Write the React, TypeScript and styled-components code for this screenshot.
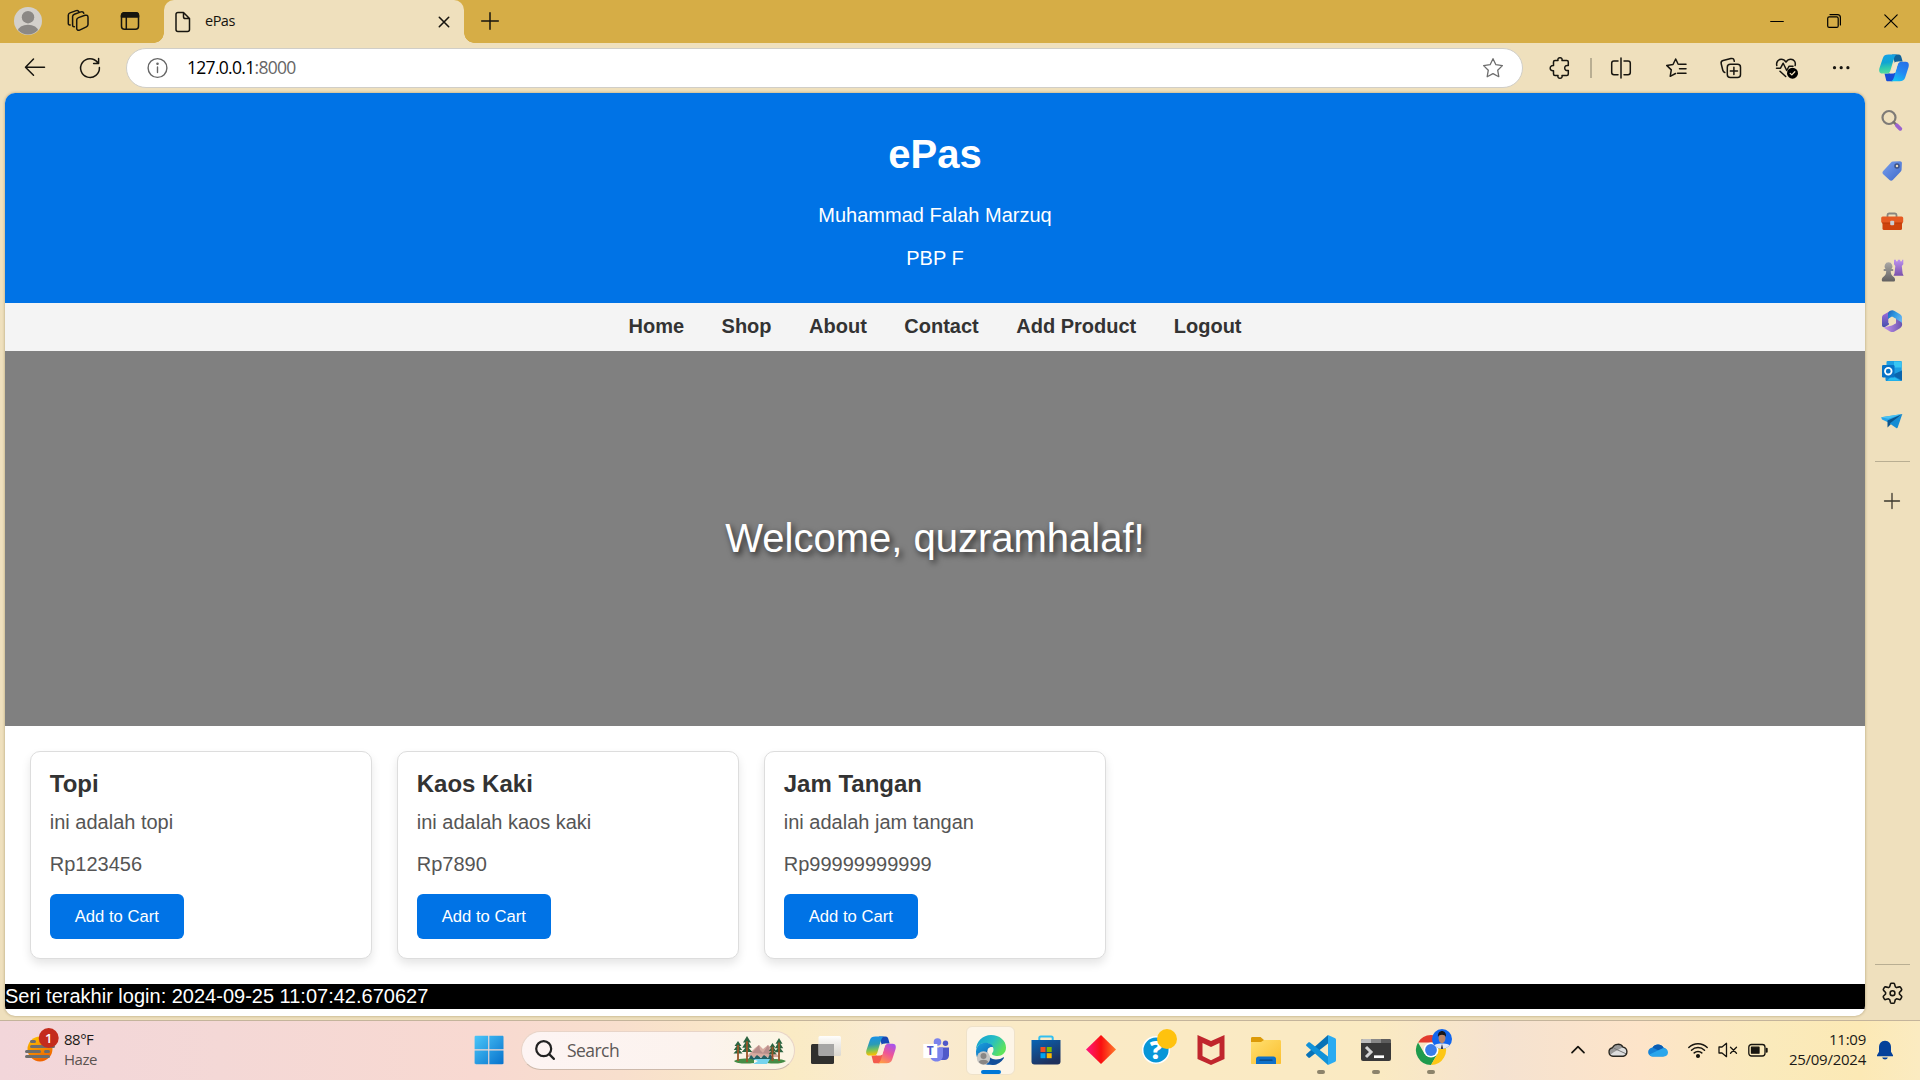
import React from 'react';
import styled, { createGlobalStyle } from 'styled-components';

const UI_FONT = '"Open Sans", "Noto Sans", sans-serif';
const PAGE_FONT = '"Liberation Sans", Arial, sans-serif';

const GlobalStyle = createGlobalStyle`
  * { box-sizing: border-box; }
  body { margin: 0; overflow: hidden; }
`;

const Desktop = styled.div`
  width: 1920px;
  height: 1080px;
  display: flex;
  flex-direction: column;
  background: #efe0bd;
  font-family: ${UI_FONT};
  color: #1b1a17;
`;

const TabStrip = styled.div`
  height: 43px;
  display: flex;
  padding-bottom: 1px;
  background: #d6ad46;
`;

const Spacer = styled.div<{ $w: number }>`
  width: ${(p) => p.$w}px;
  flex: none;
`;

const Cell = styled.div<{ $w: number; $h?: number }>`
  width: ${(p) => p.$w}px;
  height: ${(p) => (p.$h ? `${p.$h}px` : '100%')};
  flex: none;
  display: flex;
  align-items: center;
  justify-content: center;
`;

const Glyph = styled.svg<{ $size?: number }>`
  width: ${(p) => p.$size ?? 24}px;
  height: ${(p) => p.$size ?? 24}px;
  flex: none;
  display: block;
  overflow: visible;
  fill: none;
  stroke-linecap: round;
  stroke-linejoin: round;
`;

const Tab = styled.div`
  position: relative;
  width: 300px;
  height: 43px;
  display: flex;
  align-items: center;
  background: #efe0bd;
  border-radius: 10px 10px 0 0;
  &::before, &::after {
    content: '';
    position: absolute;
    bottom: 0;
    width: 10px;
    height: 10px;
  }
  &::before {
    left: -10px;
    background: radial-gradient(circle at 0 0, transparent 9.5px, #efe0bd 10px);
  }
  &::after {
    right: -10px;
    background: radial-gradient(circle at 100% 0, transparent 9.5px, #efe0bd 10px);
  }
`;

const TabTitle = styled.span`
  flex: 1;
  padding: 0 0 2px 3px;
  font-size: 14.5px;
  letter-spacing: -0.5px;
  line-height: 20px;
  color: #15130e;
`;

const WindowButtons = styled.div`
  margin-left: auto;
  padding-right: 1px;
  display: flex;
`;

const Toolbar = styled.div`
  height: 50px;
  display: flex;
  align-items: center;
`;

const AddressBar = styled.div`
  width: 1397px;
  height: 40px;
  margin: 0 9px 0 0;
  display: flex;
  align-items: center;
  border: 1px solid #d0cec8;
  border-radius: 20px;
  background: #fff;
`;

const Address = styled.span`
  flex: 1;
  padding-bottom: 2px;
  font-size: 17.5px;
  letter-spacing: -0.7px;
  line-height: 24px;
  color: #000;
  span { color: #666; }
`;

const Separator = styled.div`
  width: 2px;
  height: 20px;
  margin: 0 1px 0 2px;
  background: #b9ae92;
`;

const Body = styled.div`
  height: 927px;
  display: flex;
  padding-left: 5px;
`;

const PageFrame = styled.div`
  width: 1860px;
  height: 923px;
  display: flex;
  flex-direction: column;
  overflow: hidden;
  border-radius: 10px;
  background: #fff;
  box-shadow: 0 0 3px rgba(90, 70, 20, 0.45);
  font-family: ${PAGE_FONT};
  font-size: 20px;
  line-height: 23px;
`;

const Header = styled.header`
  height: 210px;
  padding: 11.5px 12.5px;
  background: #0073e6;
  color: #fff;
  text-align: center;
  h1 { margin: 26.5px 0; font-size: 40px; line-height: 46px; }
  p { margin: 0 0 20px; }
`;

const Nav = styled.nav`
  height: 48px;
  padding-bottom: 2px;
  display: flex;
  justify-content: center;
  align-items: center;
  gap: 37.5px;
  background: #f4f4f4;
  color: #333;
  font-weight: bold;
`;

const Hero = styled.section`
  height: 375px;
  padding-bottom: 2px;
  display: flex;
  align-items: center;
  justify-content: center;
  background: #808080;
  color: #fff;
  font-size: 40px;
  line-height: 46px;
  text-shadow: 2.5px 2.5px 6px rgba(0, 0, 0, 0.7);
`;

const Products = styled.section`
  display: grid;
  grid-template-columns: repeat(5, 1fr);
  gap: 25px;
  padding: 25px;
`;

const Card = styled.article`
  height: 208px;
  padding: 18px 18.75px;
  border: 1px solid #ddd;
  border-radius: 10px;
  background: #fff;
  box-shadow: 0 5px 10px rgba(0, 0, 0, 0.1);
  h3 { margin: 0 0 13px; font-size: 24px; line-height: 28px; color: #333; }
  p { margin: 0 0 19px; color: #555; }
  p + p { margin-bottom: 18px; }
`;

const CartButton = styled.button`
  display: block;
  width: 134px;
  height: 45px;
  padding: 0;
  border: 0;
  border-radius: 6px;
  background: #0073e6;
  color: #fff;
  font-family: ${PAGE_FONT};
  font-size: 16.67px;
`;

const LoginBar = styled.footer`
  height: 25px;
  background: #000;
  color: #fff;
  line-height: 24px;
`;

const Sidebar = styled.aside`
  width: 54px;
  height: 927px;
  padding-top: 3px;
  display: flex;
  flex-direction: column;
  align-items: center;
`;

const SideRule = styled.div<{ $top: number }>`
  width: 35px;
  height: 1px;
  flex: none;
  margin-top: ${(p) => p.$top}px;
  background: #b9ae92;
`;

const Taskbar = styled.footer`
  height: 60px;
  display: flex;
  align-items: stretch;
  border-top: 1px solid #c4b49b;
  background: linear-gradient(90deg, #f2d6da 0, #f4d8d6 220px, #f8d9d1 480px, #f8dfcd 620px, #faebc4 790px, #f9ead4 900px, #faeac6 1010px, #faeac2 1380px, #f5e2d0 1500px, #fde4c9 1640px, #faeabc 1760px, #fce9b5 1860px, #fbebc1 1920px);
`;

const Weather = styled.div`
  width: 461px;
  display: flex;
  align-items: center;
  padding: 0 0 2px 24px;
  gap: 7px;
`;

const WeatherText = styled.div`
  padding-bottom: 2px;
  font-size: 15px;
  line-height: 20px;
  letter-spacing: -0.5px;
  span { display: block; color: #5c5450; }
`;

const SearchPill = styled.div`
  width: 274px;
  height: 39px;
  margin: 10px 3px 0 5px;
  display: flex;
  align-items: center;
  border: 1px solid #e8d4c8;
  border-bottom-color: #cdb9ab;
  border-radius: 20px;
  background: linear-gradient(90deg, #fdf4f3, #fcf3ee 65%, #fbf5e2);
  font-size: 17.5px;
  letter-spacing: -0.55px;
  color: #5c5856;
  padding: 0 7px 1px 11px;
  span { flex: 1; padding-left: 10px; }
`;

const AppButton = styled.div<{ $active?: boolean; $running?: boolean }>`
  position: relative;
  width: 49px;
  height: 49px;
  margin: 5px 3px 0;
  padding-bottom: 2px;
  flex: none;
  display: flex;
  align-items: center;
  justify-content: center;
  border: 1px solid ${(p) => (p.$active ? '#efe2c9' : 'transparent')};
  border-radius: 6px;
  background: ${(p) => (p.$active ? '#fdf5e7' : 'transparent')};
  &::after {
    content: '';
    display: ${(p) => (p.$active || p.$running ? 'block' : 'none')};
    position: absolute;
    bottom: 0;
    width: ${(p) => (p.$active ? 20 : 8)}px;
    height: 4px;
    border-radius: 2px;
    background: ${(p) => (p.$active ? '#0078d7' : '#8c836b')};
  }
`;

const Tray = styled.div`
  margin-left: auto;
  padding-bottom: 2px;
  display: flex;
  align-items: center;
`;

const Clock = styled.div`
  width: 93px;
  padding: 0 1px 2px 0;
  font-size: 15px;
  line-height: 20px;
  letter-spacing: -0.25px;
  text-align: right;
`;

const INK = '#17150f';
const K = { stroke: INK, strokeWidth: 1.5 };

const products = [
  { name: 'Topi', about: 'ini adalah topi', price: 'Rp123456' },
  { name: 'Kaos Kaki', about: 'ini adalah kaos kaki', price: 'Rp7890' },
  { name: 'Jam Tangan', about: 'ini adalah jam tangan', price: 'Rp99999999999' },
];

const GEAR =
  'M9.400 5.300 10.300 2.200c.2-.6.500-.9 1.100-.9h2.200c.6 0 .9.300 1.100.9l.9 3.100 1.300.8 3.100-.8c.6-.1 1 0 1.300.5l1.100 1.900c.3.5.2.9-.2 1.400l-2.200 2.300v1.600l2.200 2.300c.4.500.5.9.2 1.400l-1.100 1.900c-.3.500-.7.600-1.300.5l-3.100-.8-1.300.8-.9 3.100c-.2.600-.5.900-1.100.9h-2.200c-.6 0-.9-.3-1.100-.9l-.9-3.100-1.300-.8-3.100.8c-.6.1-1 0-1.300-.5l-1.100-1.900c-.3-.5-.2-.9.2-1.400L5 13V11.400L2.800 9.100c-.4-.5-.5-.9-.2-1.400l1.100-1.900c.3-.5.7-.6 1.300-.5l3.100.8z';

/* The ribbon mark, shared by the toolbar (cool) and the taskbar (warm). */
const Copilot = ({ id, warm }: { id: string; warm?: boolean }) => (
  <Glyph $size={30} viewBox="0 0 30 30">
    <defs>
      <linearGradient id={`${id}a`} x1="0" y1="0" x2="0.1" y2="1">
        <stop offset="0" stopColor={warm ? '#1590ee' : '#14a1ea'} />
        <stop offset="0.45" stopColor={warm ? '#2b9bb5' : '#10a5d3'} />
        <stop offset="0.72" stopColor={warm ? '#76c15c' : '#2dc8b0'} />
        <stop offset="1" stopColor={warm ? '#fac100' : '#53dc9f'} />
      </linearGradient>
      <linearGradient id={`${id}b`} x1="0.8" y1="0" x2="0.3" y2="1">
        <stop offset="0" stopColor={warm ? '#a653ef' : '#2670e8'} />
        <stop offset="0.5" stopColor={warm ? '#ef5596' : '#2487f2'} />
        <stop offset="1" stopColor={warm ? '#ff9b47' : '#12c3f5'} />
      </linearGradient>
    </defs>
    <path d="M13 1.500h6.500c2 0 2.700 1.500 3.300 4l.8 3H20c-2.200 0-3 1.300-3.600 3L13 1.500z" fill={warm ? '#1648b5' : '#11639b'} />
    <path d="M8 28.300h5c2 0 3-1.300 3.700-4l1-4.500L8 20.500H5.500l1 4c.5 2 .5 3.300 1.500 3.800z" fill={warm ? '#f35a4c' : '#174dd6'} />
    <path d="M9.500 1.500h9c-2.300.4-3 2.300-3.700 4.500l-3.500 11.700c-.7 2-1.800 2.900-3.600 2.900H3.200C.2 20.600-.3 17.700.5 15L3.800 5.200C4.700 2.600 6.300 1.500 9.500 1.500z" fill={`url(#${id}a)`} />
    <path d="M20.500 28.300h-9c2.300-.4 3-2.300 3.700-4.500l3.500-12.200c.7-2 1.800-2.900 3.600-2.900h4.500c3 0 3.500 2.900 2.700 5.600l-3.300 10.300c-.9 2.600-2.500 3.700-5.700 3.700z" fill={`url(#${id}b)`} />
    <path d="M15.200 10.500c.6-1.400 1.500-1.800 3-1.800h2.600c-1.200.5-1.700 1.500-2.100 2.900l-2 6.500c-.6 1.900-1.500 2.500-3.300 2.500h-3.200c1.200-.5 1.800-1.500 2.200-2.900z" fill={warm ? '#fbeed8' : '#efe6cd'} />
  </Glyph>
);

const TabStripView = () => (
  <TabStrip>
    <Cell $w={56}>
      <Glyph $size={28} viewBox="0 0 28 28">
        <clipPath id="av"><circle cx="14" cy="14" r="13.500" /></clipPath>
        <circle cx="14" cy="14" r="14" fill="#d3d0cb" />
        <circle cx="14" cy="10.200" r="6.200" fill="#8b8885" />
        <ellipse cx="14" cy="24" rx="10" ry="6.300" fill="#8b8885" clipPath="url(#av)" />
      </Glyph>
    </Cell>
    <Cell $w={43}>
      <Glyph viewBox="0 0 24 24" {...K}>
        <path d="M12.500 8.600 19 6.300c1.800-.5 3 .2 3 1.900v7.300c0 1-.6 1.900-1.600 2.300l-6.800 3.300c-1.500.6-2.900 0-2.900-1.500v-8.700c0-1.100.7-1.900 1.800-2.300zM8.400 17.700c-1.100.2-1.800-.4-1.800-1.500V7.500c0-1.100.7-1.900 1.800-2.300l6.500-2.300c1.500-.4 2.500 0 2.900 1.300M4.200 15.900c-1.200.3-1.900-.4-1.900-1.500V6.200c0-1.100.6-1.900 1.700-2.300l6.200-2.300c1.400-.5 2.200 0 2.600 1" />
      </Glyph>
    </Cell>
    <Cell $w={62}>
      <Glyph $size={20} viewBox="0 0 20 20" {...K}>
        <rect x="1.500" y="1.800" width="17" height="16.500" rx="3" />
        <path d="M1.500 6V4.500c0-1.700 1-2.700 2.700-2.700h11.600c1.700 0 2.700 1 2.700 2.700V6zM6.300 6v12" fill={INK} />
      </Glyph>
    </Cell>
    <Spacer $w={3} />
    <Tab>
      <Cell $w={38}>
        <Glyph viewBox="0 0 24 24" {...K}>
          <path d="M7 2.700h5.500l6 6v11c0 1.300-.7 2-2 2H7c-1.300 0-2-.7-2-2v-15c0-1.300.7-2 2-2zM12.500 2.700v4.200c0 1.200.6 1.800 1.800 1.800h4.200" transform="translate(0 -.2)" />
        </Glyph>
      </Cell>
      <TabTitle>ePas</TabTitle>
      <Cell $w={40}>
        <Glyph $size={10} viewBox="0 0 10 10" {...K} strokeWidth={1.600}><path d="m.3.300 9.400 9.400M9.700.300.300 9.700" /></Glyph>
      </Cell>
    </Tab>
    <Cell $w={52}>
      <Glyph $size={16} viewBox="0 0 16 16" {...K}><path d="M8-.3v16.600M-.3 8h16.600" /></Glyph>
    </Cell>
    <WindowButtons>
      <Cell $w={57}><Glyph $size={14} viewBox="0 0 14 14" stroke="#000" strokeWidth={1.200}><path d="M.7 7.500h12.600" /></Glyph></Cell>
      <Cell $w={57}>
        <Glyph $size={14} viewBox="0 0 14 14" stroke="#000" strokeWidth={1.200}>
          <rect x=".7" y="2.900" width="10.500" height="10.500" rx="1.500" />
          <path d="M3 .6h7.500c1.800 0 2.900 1 2.900 2.900V11" />
        </Glyph>
      </Cell>
      <Cell $w={57}><Glyph $size={14} viewBox="0 0 14 14" stroke="#000" strokeWidth={1.200}><path d="m.8.800 12.400 12.400M13.200.800.800 13.200" /></Glyph></Cell>
    </WindowButtons>
  </TabStrip>
);

const ToolbarView = () => (
  <Toolbar>
    <Cell $w={70}>
      <Glyph viewBox="0 0 24 24" {...K}><path d="M21.500 11.300H3M10.500 3 2.500 11.300l8 8" /></Glyph>
    </Cell>
    <Cell $w={40}><Glyph viewBox="0 0 24 24" {...K}><path d="M19.600 6.500A9.400 9.400 0 1 0 21.400 11.500M20.600 2.500v5h-5" /></Glyph></Cell>
    <Spacer $w={16} />
    <AddressBar>
      <Cell $w={60}>
        <Glyph viewBox="0 0 24 24" stroke="#666" strokeWidth={1.400}>
          <circle cx="12.500" cy="12" r="9.400" /><path d="M12.500 11v5.500" /><circle cx="12.500" cy="7.700" r=".6" fill="#666" />
        </Glyph>
      </Cell>
      <Address>127.0.0.1<span>:8000</span></Address>
      <Cell $w={58}>
        <Glyph viewBox="0 0 24 24" stroke="#6d6d6d" strokeWidth={1.300}>
          <path d="m12 2.700 2.900 6 6.500.9-4.700 4.600 1.100 6.500L12 17.600l-5.800 3.100 1.100-6.500-4.700-4.600 6.500-.9z" />
        </Glyph>
      </Cell>
    </AddressBar>
    <Cell $w={56}>
      <Glyph viewBox="0 0 24 24" {...K}>
        <path d="M7 4.600h3c-.5-2 .5-2.900 2-2.900s2.500.9 2 2.900h4.800c1 0 1.500.5 1.500 1.500v3.400c-2.300-.4-3.600.6-3.600 2.500s1.300 2.900 3.600 2.500v3.400c0 1-.5 1.500-1.500 1.500H14c.5 2-.5 2.900-2 2.900s-2.500-.9-2-2.900H7c-1 0-1.500-.5-1.500-1.500v-3.200c-2.200.3-3.300-.9-3.300-2.500s1.100-2.900 3.300-2.600V6.100c0-1 .5-1.500 1.500-1.500z" />
      </Glyph>
    </Cell>
    <Separator />
    <Cell $w={55}>
      <Glyph viewBox="0 0 24 24" {...K}>
        <path d="M12 2v20M9 5H5C3.500 5 2.700 5.800 2.700 7.200v9.300c0 1.400.8 2.200 2.300 2.200h4M15 5h4c1.500 0 2.300.8 2.300 2.200v9.300c0 1.400-.8 2.200-2.300 2.200h-4" />
      </Glyph>
    </Cell>
    <Cell $w={55}>
      <Glyph viewBox="0 0 24 24" {...K}>
        <path d="M14.200 8.200 11.700 3 9 8.500l-6.300.9 4.600 4.500-1.100 6.400 5.300-2.800M15.500 8.200H22M15.500 12.700H22M13.500 17.200H22" />
      </Glyph>
    </Cell>
    <Cell $w={56}>
      <Glyph viewBox="0 0 24 24" {...K}>
        <rect x="8.300" y="8.300" width="13.200" height="13.200" rx="3" />
        <path d="M14.900 11.300v7.200M11.300 14.900h7.200M5.800 16.500c-1.200-.3-1.700-1-2-2.200L2.200 7.700C1.800 6 2.500 4.900 4.100 4.500l7.800-2c1.600-.4 2.800.3 3.200 1.900l.2.900" />
      </Glyph>
    </Cell>
    <Cell $w={56}>
      <Glyph viewBox="0 0 24 24" {...K}>
        <path d="M1.800 9.500C1 6.500 3 3.300 6.200 3.300c2.300 0 3.600 1 4.800 2.800 1.200-1.800 2.500-2.800 4.800-2.800 3.200 0 5.200 3 4.300 6.200M1.500 12.200h4l2.700-5 3.500 7.300 2.300-4.200h4M5 15.200l5.700 5.300" />
        <circle cx="17.500" cy="17.200" r="5.500" fill="#000" stroke="none" />
        <path d="m15.200 17.400 1.600 1.500 3-3.200" stroke="#efe0bd" strokeWidth="1.300" />
      </Glyph>
    </Cell>
    <Cell $w={53}>
      <Glyph viewBox="0 0 24 24">
        <g fill={INK}><circle cx="4.500" cy="11.700" r="1.600" /><circle cx="11.200" cy="11.700" r="1.600" /><circle cx="17.900" cy="11.700" r="1.600" /></g>
      </Glyph>
    </Cell>
    <Cell $w={52}><Copilot id="side" /></Cell>
  </Toolbar>
);

const SidebarView = () => (
  <Sidebar>
    <Cell $w={55} $h={50}>
      <Glyph viewBox="0 0 24 24">
        <circle cx="9" cy="8.500" r="6.500" stroke="#7e7b77" strokeWidth="2.200" />
        <path d="m13.700 13.200 2.500 2.500" stroke="#77736f" strokeWidth="2.500" />
        <path d="m16.800 16.300 3.500 3.500" stroke="#9b62cf" strokeWidth="3.800" />
      </Glyph>
    </Cell>
    <Cell $w={55} $h={50}>
      <Glyph viewBox="0 0 24 24">
        <defs><linearGradient id="tag" x1="0" y1="0" x2="1" y2="1"><stop stopColor="#78a0ee" /><stop offset="1" stopColor="#4069c9" /></linearGradient></defs>
        <path d="M13 2.500 20 2.300c1.200 0 1.900.7 1.900 1.800l-.3 6.500c0 .9-.4 1.600-1 2.200l-7.800 8.100c-1 1-2.300 1-3.300 0l-6.300-5.600c-1-1-1-2.300 0-3.300l7.600-8.300c.6-.7 1.300-1.100 2.200-1.200z" fill="url(#tag)" />
        <circle cx="17" cy="7" r="2" fill="#e9dcbe" stroke="#3c5187" strokeWidth="1.500" />
      </Glyph>
    </Cell>
    <Cell $w={55} $h={50}>
      <Glyph viewBox="0 0 24 24">
        <g transform="translate(0 .5)">
          <path d="M7.500 8V5.600C7.500 4.600 8 4 9 4h6c1 0 1.500.6 1.500 1.600V8" stroke="#898680" strokeWidth="1.800" />
          <rect x="2.500" y="10" width="19.500" height="10.500" rx="1.500" fill="#cf430d" />
          <rect x="1.200" y="7" width="22" height="6.500" rx="1.500" fill="#e65a22" />
          <path d="M2.500 13.500H22" stroke="#b93b08" strokeWidth="1" />
          <rect x="10.200" y="11.300" width="4" height="4.500" rx="1" fill="#c9ced6" />
        </g>
      </Glyph>
    </Cell>
    <Cell $w={55} $h={50}>
      <Glyph viewBox="0 0 24 24">
        <defs>
          <linearGradient id="pw" x2="0" y2="1"><stop stopColor="#aaa8a5" /><stop offset="1" stopColor="#626060" /></linearGradient>
          <linearGradient id="rk" x2="0" y2="1"><stop stopColor="#bd91ef" /><stop offset="1" stopColor="#7a51ab" /></linearGradient>
        </defs>
        <path d="M14 .8h2v1.500h1.800V.8h2.400v1.500H22V.8h1.300v4.500L21.800 7l.8 7.500 1 2.200H13.500l1-2.200.8-7.500L14 5.300z" fill="url(#rk)" />
        <path d="M8.500 3.300a4 4 0 0 1 3 6.600h1.700v2h-2.500c.1 3 .8 4.500 3 6 1.700 1 2 4.600 0 4.600H3.200c-2 0-1.700-3.600 0-4.600 2.200-1.500 3-3 3-6H3.700v-2h1.800a4 4 0 0 1 3-6.600z" fill="url(#pw)" />
      </Glyph>
    </Cell>
    <Cell $w={55} $h={50}>
      <Glyph viewBox="0 0 24 24">
        <defs>
          <linearGradient id="m1" x1="0" y1="0" x2="0" y2="1"><stop stopColor="#a86fe0" /><stop offset="1" stopColor="#4650ad" /></linearGradient>
          <linearGradient id="m2" x1="0" y1="0" x2="1" y2=".6"><stop stopColor="#1b5fb8" /><stop offset=".5" stopColor="#2f9ae2" /><stop offset="1" stopColor="#69b5f0" /></linearGradient>
          <linearGradient id="m3" x2="1" y2="0"><stop stopColor="#c593ee" /><stop offset="1" stopColor="#6952ad" /></linearGradient>
        </defs>
        <path d="M11 1.500 4 5.600c-1.300.7-2 1.800-2 3.200v7.400c0 1.600 1.600 2.500 3 1.700L9 15.500V8.300z" fill="url(#m1)" />
        <path d="M10 1.900c1.500-.9 3-.9 4.500 0L20 5.300c1.300.8 2 1.900 2 3.300v7L16 12.500V9.800L12 7.500 8 10V4.700c0-1.200.8-2.100 2-2.800z" fill="url(#m2)" />
        <path d="M4.500 18.200 12 16.500l4-2.300V10l5 3c1.300.9 1.300 2.300 1 3.500-.3 1-1 2-2 2.700l-5.500 3.200c-1.600.8-3 .8-4.500 0l-5-3c-.6-.3-.8-.8-.5-1.200z" fill="url(#m3)" />
        <path d="m12 8 3.700 2.100v3.800L12 16l-3.700-2.100v-3.800z" fill="#efe0bd" />
      </Glyph>
    </Cell>
    <Cell $w={55} $h={50}>
      <Glyph viewBox="0 0 24 24">
        <rect x="6.500" y="2" width="15.300" height="13" rx="1" fill="#1d9fe3" />
        <path d="M14 2.500h7.500v6H14z" fill="#38c6f3" />
        <path d="m5.500 12 8.500 4.500 8-5v9.500c0 .7-.5 1-1 1H7c-1 0-1.500-.5-1.500-1.500z" fill="#128bd8" />
        <path d="m12 16 10 5.500V11.500z" fill="#0b65ad" />
        <path d="M7 21.800h14L12 17z" fill="#27bdf0" />
        <rect x="2" y="6" width="12.500" height="12.500" rx="1.200" fill="#0872c6" />
        <circle cx="8.300" cy="12.200" r="3.300" stroke="#fff" strokeWidth="1.800" />
      </Glyph>
    </Cell>
    <Cell $w={55} $h={50}>
      <Glyph viewBox="0 0 24 24">
        <path d="M1.200 8.200 22.300 5 9 13.800 2 10.500z" fill="#27a5e9" />
        <path d="M1.200 8.200 22.300 5l-14 4.800z" fill="#4ac3f3" />
        <path d="M22.300 5 7.500 11.500v7l3.300-3.200z" fill="#0b548c" />
        <path d="M22.300 5 9.700 14.500l6.500 4.500c.7.400 1.200.2 1.500-.5z" fill="#158cd4" />
      </Glyph>
    </Cell>
    <SideRule $top={15} />
    <Cell $w={55} $h={78}><Glyph $size={16} viewBox="0 0 16 16" stroke="#3b372d" strokeWidth={1.300}><path d="M8 .5v15M.5 8h15" /></Glyph></Cell>
    <SideRule $top={424} />
    <Cell $w={55} $h={56}>
      <Glyph $size={23} viewBox="0 0 25 25" {...K} strokeWidth={1.700}>
        <path d={GEAR} /><circle cx="12.500" cy="12.200" r="2.600" />
      </Glyph>
    </Cell>
  </Sidebar>
);

const Tree = ({ x, y, h, w }: { x: number; y: number; h: number; w: number }) => (
  <g transform={`translate(${x} ${y})`}>
    <path d={`M0 0 ${w / 2} ${h * 0.25}H${w * 0.2}L${w * 0.6} ${h * 0.45}H${w * 0.2}L${w * 0.65} ${h * 0.62}H${-w * 0.65}L${-w * 0.2} ${h * 0.45}H${-w * 0.6}L${-w * 0.2} ${h * 0.25}H${-w / 2}z`} fill="#2c6440" />
    <path d={`M0 ${h * 0.2}V${h}`} stroke="#9a5527" strokeWidth="1.800" />
  </g>
);

const TaskbarView = () => (
  <Taskbar>
    <Weather>
      <Glyph $size={33} viewBox="0 0 33 33">
        <defs><linearGradient id="sun" x2=".4" y2="1"><stop stopColor="#fcc800" /><stop offset="1" stopColor="#f06400" /></linearGradient></defs>
        <circle cx="16" cy="16" r="12.500" fill="url(#sun)" />
        <path d="M7.500 8.500h3M7.500 13.500h22M2.500 18.500h13M21.500 18.500h3M2.500 23.500h22" stroke="#6d6d6d" strokeWidth="3" />
        <circle cx="24.700" cy="5" r="10" fill="#c42b1c" />
        <text x="24.700" y="9.700" fill="#fff" textAnchor="middle" fontSize="13" fontWeight="600" fontFamily={UI_FONT}>1</text>
      </Glyph>
      <WeatherText>88°F<span>Haze</span></WeatherText>
    </Weather>
    <AppButton>
      <Glyph $size={30} viewBox="0 0 30 30">
        <defs><linearGradient id="win" gradientUnits="userSpaceOnUse" x1="0" y1="0" x2="30" y2="30"><stop stopColor="#4cc8fa" /><stop offset="1" stopColor="#0670cb" /></linearGradient></defs>
        <path d="M2 .8h12.200v13.400H.6V2C.6 1.200 1.200.800 2 .800zM15.300.800h13c.8 0 1.200.4 1.200 1.200v12.200H15.300zM.600 15.500h13.600v13.700H2c-.8 0-1.400-.4-1.400-1.200zM15.300 15.500h14.200V28c0 .8-.4 1.200-1.200 1.200h-13z" fill="url(#win)" />
      </Glyph>
    </AppButton>
    <SearchPill>
      <Glyph viewBox="0 0 24 24" stroke="#222" strokeWidth={2.200}><circle cx="10.700" cy="10.700" r="7.500" /><path d="m16.400 16.400 4.500 4.500" /></Glyph>
      <span>Search</span>
      <svg width="54" height="30" viewBox="0 0 54 30">
        <path d="m13 22 9-9 4-3 4 4 5-4 6 5 5 7z" fill="#d6aaa0" />
        <path d="m19 18 7-8 1 5 3 3 5-8 3 9z" fill="#b88e8b" />
        <path d="m15 25 3-5 3 3 3-3 4 3 3-3 4 3 2-4 5 6z" fill="#246064" />
        <path d="M1 26c6-3 14-3 20-1v3c-7 1-17 1-20-2zM36 25c5-2 14-1 17 1-4 3-12 3-19 2z" fill="#468c45" />
        <path d="M20 24h17l-3 5H20l5-3z" fill="#76d4ee" />
        <Tree x={5} y={6} h={20} w={7} />
        <Tree x={14} y={1} h={26} w={8} />
        <Tree x={39.500} y={8} h={18} w={6} />
        <Tree x={46} y={3} h={23} w={7} />
      </svg>
    </SearchPill>
    <AppButton>
      <Glyph $size={30} viewBox="0 0 30 30">
        <defs><linearGradient id="tv" x2="0" y2="1"><stop stopColor="#fff" stopOpacity=".95" /><stop offset="1" stopColor="#d2d2d2" stopOpacity=".75" /></linearGradient></defs>
        <rect x="0" y="9" width="23" height="20" rx="1.500" fill="#30302e" />
        <rect x="7.500" y="1" width="22.500" height="20" rx="1.500" fill="url(#tv)" />
        <path d="M7.500 9H23v12H9c-1 0-1.500-.5-1.500-1.500z" fill="#a6a6a5" />
      </Glyph>
    </AppButton>
    <AppButton><Copilot id="task" warm /></AppButton>
    <AppButton>
      <Glyph $size={28} viewBox="0 0 28 28">
        <circle cx="15.500" cy="6" r="3.800" fill="#7b83eb" /><circle cx="23.500" cy="7.300" r="2.700" fill="#5059c9" />
        <path d="M17 11.500h10v7.800c0 3-2 4.700-4.300 4.700H17z" fill="#5059c9" />
        <path d="M8 11.500h13V19c0 4-2.500 6.500-6.500 6.500S8 23 8 19z" fill="#7b83eb" />
        <rect x="1.300" y="8" width="14" height="14" fill="#fff" />
        <text x="8.300" y="19.300" textAnchor="middle" fill="#5059c9" fontSize="12" fontWeight="700" fontFamily={UI_FONT}>T</text>
      </Glyph>
    </AppButton>
    <AppButton $active>
      <Glyph $size={30} viewBox="0 0 30 30">
        <defs>
          <linearGradient id="ed1" x2="1" y2=".5"><stop stopColor="#139fd2" /><stop offset=".55" stopColor="#27bdc5" /><stop offset="1" stopColor="#5de35b" /></linearGradient>
          <linearGradient id="ed2" x2=".7" y2="1"><stop stopColor="#1aa2df" /><stop offset="1" stopColor="#0b56ac" /></linearGradient>
        </defs>
        <path d="M0 15C0 6.500 6.800 0 15 0c8.500 0 15 5.500 15 12.500 0 5.500-4 8.500-8.500 8.500-3.500 0-5.700-1.200-5.500-2.300.2-1 1.500-1.500 1.500-4C17.500 11 14 8 9.500 8 4.500 8 1 11 0 15z" fill="url(#ed1)" />
        <path d="M0 16.500C.5 11 4.500 7.800 9.300 7.800c3.700 0 7 1.700 8 4.500-4-1-6.300 1.500-6.300 5.500 0 6.500 5.500 10.500 10 11.200C10 32-.5 27 0 16.500z" fill="url(#ed2)" />
        <path d="M11.500 14c-1.500 6 3 10.500 8.500 10.500 3.300 0 5.300-1 7-2 1-.5 1.200.2.700 1-2.400 3.700-6 6.200-11 6.500-6-1.500-9-8-5.200-16z" fill="#124f9a" />
        <circle cx="7.500" cy="23" r="6.700" fill="#c7c6c4" /><circle cx="7.500" cy="21" r="3" fill="#898684" /><path d="M2.800 27c1-3 8.500-3 9.500 0-2.200 3.300-7.300 3.300-9.500 0z" fill="#898684" />
      </Glyph>
    </AppButton>
    <AppButton>
      <Glyph $size={30} viewBox="0 0 30 30">
        <defs><linearGradient id="st" x2=".5" y2="1"><stop stopColor="#0864b5" /><stop offset="1" stopColor="#1f315d" /></linearGradient></defs>
        <path d="M8.300 6V3c0-1 .5-1.500 1.500-1.500h10.400c1 0 1.500.5 1.500 1.500v3" stroke="#32bff0" strokeWidth="2" />
        <path d="M.5 5h29v21.500c0 2-1 3-3 3h-23c-2 0-3-1-3-3z" fill="url(#st)" />
        <path d="M9.500 12h5v5h-5z" fill="#f25022" /><path d="M15.700 12h5v5h-5z" fill="#7fba00" /><path d="M9.500 18.200h5v5h-5z" fill="#00a4ef" /><path d="M15.700 18.200h5v5h-5z" fill="#ffb900" />
      </Glyph>
    </AppButton>
    <AppButton>
      <Glyph $size={30} viewBox="0 0 30 30">
        <defs><linearGradient id="di" x2="1" y2="0"><stop stopColor="#ff1683" /><stop offset=".5" stopColor="#fa1010" /><stop offset="1" stopColor="#ff7a2a" /></linearGradient></defs>
        <path d="m15 0 15 14.500L15 29 0 14.500z" fill="url(#di)" />
      </Glyph>
    </AppButton>
    <AppButton>
      <Glyph $size={30} viewBox="0 0 30 30">
        <circle cx="15" cy="15" r="13.300" fill="#0796d8" stroke="#fff" strokeWidth="1.500" />
        <text x="15" y="24" textAnchor="middle" fill="#fff" fontSize="25" fontWeight="800" fontFamily={UI_FONT}>?</text>
        <circle cx="26" cy="4" r="10" fill="#ffc20e" />
      </Glyph>
    </AppButton>
    <AppButton>
      <Glyph $size={30} viewBox="0 0 30 30">
        <path d="m1.500 0 13.500 6L28.500 0v24L15 30 1.500 24zm5 8v13l8.500 4.200 8.500-4.200V8L15 12z" fill="#c0262d" fillRule="evenodd" />
      </Glyph>
    </AppButton>
    <AppButton>
      <Glyph $size={30} viewBox="0 0 30 30">
        <defs><linearGradient id="fo" x2="1" y2="1"><stop stopColor="#ffdf70" /><stop offset="1" stopColor="#fbbf2e" /></linearGradient></defs>
        <path d="M0 3.500C0 2.500.5 2 1.500 2h8l4 3.500V10H0z" fill="#dc9a08" />
        <path d="M0 7h10l3-2h15.500c1 0 1.500.5 1.500 1.500V28c0 .6-.4 1-1 1H1c-.6 0-1-.4-1-1z" fill="url(#fo)" />
        <path d="M5 29v-5c0-1.500 1-2.500 2.500-2.500h15c1.500 0 2.500 1 2.500 2.500v5z" fill="#0e70c8" />
        <path d="M9 25.200h12" stroke="#08437c" strokeWidth="1.200" />
      </Glyph>
    </AppButton>
    <AppButton $running>
      <Glyph $size={30} viewBox="0 0 30 30">
        <path d="M22 0v8.500L4 22.500c-.6.5-1.200.5-1.700 0L.5 20.800c-.6-.6-.6-1.200 0-1.700z" fill="#0872b7" />
        <path d="M22 30v-8.500L4 7.500c-.6-.5-1.200-.5-1.700 0L.5 9.200c-.6.6-.6 1.200 0 1.700z" fill="#1192d9" />
        <path d="m22 0 6.700 3c.8.400 1.300 1 1.300 2v20c0 1-.5 1.600-1.300 2L22 30z" fill="#2aabf2" />
      </Glyph>
    </AppButton>
    <AppButton $running>
      <Glyph $size={30} viewBox="0 0 30 30">
        <rect x="0" y="4" width="30" height="22" rx="2" fill="#393939" />
        <path d="M2 4h8v4H0V6c0-1.200.8-2 2-2z" fill="#bcbcbc" /><path d="M10 4h10v4H10z" fill="#888" /><path d="M20 4h8c1.200 0 2 .8 2 2v2H20z" fill="#5d5d5d" />
        <path d="m5 12 5 5-5 5" stroke="#d4d4d4" strokeWidth="3" strokeLinecap="butt" strokeLinejoin="miter" />
        <path d="M13 21.700h10" stroke="#fff" strokeWidth="2.700" strokeLinecap="butt" />
      </Glyph>
    </AppButton>
    <AppButton $running>
      <Glyph $size={30} viewBox="0 0 30 30">
        <path d="M2 7.500a15 15 0 0 1 26 0H15z" fill="#e33b2e" />
        <path d="M2 7.500A15 15 0 0 0 15 30l6.500-11.300L15 15l-6.500 3.700z" fill="#1f9b4d" />
        <path d="M28 7.500A15 15 0 0 1 15 30l6.500-11.300L22 15l-7-7.500z" fill="#fdc716" />
        <circle cx="15" cy="15" r="7.500" fill="#fff" /><circle cx="15" cy="15" r="5.900" fill="#3a7de9" />
        <clipPath id="ph"><circle cx="26" cy="4" r="10" /></clipPath>
        <g clipPath="url(#ph)">
          <path d="M16-6h20v20H16z" fill="#1166ee" />
          <path d="M17 14c0-5 4-5.500 9-5.500s9 .5 9 5.500z" fill="#e3e6ef" />
          <ellipse cx="26" cy="3.300" rx="3.400" ry="5" fill="#b98468" />
          <path d="M22 2c-1-8 9-8 8 0-1-3-7-3-8 0z" fill="#18171c" />
          <path d="m26 9 1.200 5h-2.400z" fill="#1c2440" />
        </g>
      </Glyph>
    </AppButton>
    <Tray>
      <Cell $w={60}><Glyph $size={14} viewBox="0 0 14 14" {...K} strokeWidth={1.700}><path d="M1 9.700 7 3.700l6 6" /></Glyph></Cell>
      <Cell $w={20}>
        <Glyph $size={20} viewBox="0 0 20 20">
          <path d="M5 16.300a4.300 4.300 0 0 1-.5-8.500 6 6 0 0 1 10.500-.7 4.700 4.700 0 0 1 .3 9.200z" fill="#dedede" />
          <path d="M1.500 12.500c0-2.500 1.500-4.200 3.500-4.500C7 4 12 3.500 14.500 7.500L6 12l-4 3z" fill="#999" />
          <path d="m6.500 8.500 12 5.500" stroke="#777" strokeWidth="1" />
          <path d="M5 16.300a4.300 4.300 0 0 1-.5-8.500 6 6 0 0 1 10.500-.7 4.700 4.700 0 0 1 .3 9.200z" stroke="#282620" strokeWidth="1.400" />
        </Glyph>
      </Cell>
      <Cell $w={60}>
        <Glyph $size={20} viewBox="0 0 20 20">
          <path d="M4.800 16.500a4.500 4.500 0 0 1-.3-9A6.500 6.500 0 0 1 15.500 7.500a4.600 4.600 0 0 1-.5 9z" fill="#1683d8" />
          <path d="M4.500 7.500A6.500 6.500 0 0 1 15.500 7.500l-4 3.500z" fill="#0b5db3" />
          <path d="M1.500 14.500 13 9c4-2 7 .5 7 3.500 0 2.500-2 4-4.500 4H5c-1.700 0-2.700-.7-3.500-2z" fill="#2aa6ec" />
        </Glyph>
      </Cell>
      <Cell $w={20}>
        <Glyph $size={20} viewBox="0 0 20 20" {...K}>
          <path d="M.8 7.500a13 13 0 0 1 18.400 0M3.500 10.200a9.300 9.300 0 0 1 13 0M6.200 12.900a5.500 5.500 0 0 1 7.600 0" /><circle cx="10" cy="16" r="1.300" fill={INK} />
        </Glyph>
      </Cell>
      <Cell $w={39}>
        <Glyph $size={20} viewBox="0 0 20 20" {...K} strokeWidth={1.300}>
          <path d="M1 7h3l4.500-3.700v13.400L4 13H1zM12.500 7.200l6 6M18.500 7.200l-6 6" />
        </Glyph>
      </Cell>
      <Cell $w={22}>
        <Glyph $size={20} viewBox="0 0 20 20" {...K} strokeWidth={1.300}>
          <rect x=".8" y="4.500" width="16.200" height="11.500" rx="2.700" /><path d="M3.500 7.200h7.500v6H3.500z" fill={INK} /><path d="M18.700 8.700v3" strokeWidth="2" />
        </Glyph>
      </Cell>
      <Spacer $w={5} />
      <Clock>11:09<br />25/09/2024</Clock>
      <Cell $w={36}>
        <Glyph $size={20} viewBox="0 0 20 20">
          <path d="M10 .8c4 0 6 3 6 6.500v4.500l2 3.500v1H2v-1l2-3.500V7.300c0-3.500 2-6.500 6-6.500zM7.200 17.500h5.600c-.5 2.500-5 2.500-5.600 0z" fill="#05419a" />
        </Glyph>
      </Cell>
      <Spacer $w={17} />
    </Tray>
  </Taskbar>
);

export default function App() {
  return (
    <>
      <GlobalStyle />
      <Desktop>
        <TabStripView />
        <ToolbarView />
        <Body>
          <PageFrame>
            <Header>
              <h1>ePas</h1>
              <p>Muhammad Falah Marzuq</p>
              <p>PBP F</p>
            </Header>
            <Nav>
              {['Home', 'Shop', 'About', 'Contact', 'Add Product', 'Logout'].map((label) => (
                <span key={label}>{label}</span>
              ))}
            </Nav>
            <Hero>Welcome, quzramhalaf!</Hero>
            <Products>
              {products.map((item) => (
                <Card key={item.name}>
                  <h3>{item.name}</h3>
                  <p>{item.about}</p>
                  <p>{item.price}</p>
                  <CartButton>Add to Cart</CartButton>
                </Card>
              ))}
            </Products>
            <LoginBar>Seri terakhir login: 2024-09-25 11:07:42.670627</LoginBar>
          </PageFrame>
          <SidebarView />
        </Body>
        <TaskbarView />
      </Desktop>
    </>
  );
}
